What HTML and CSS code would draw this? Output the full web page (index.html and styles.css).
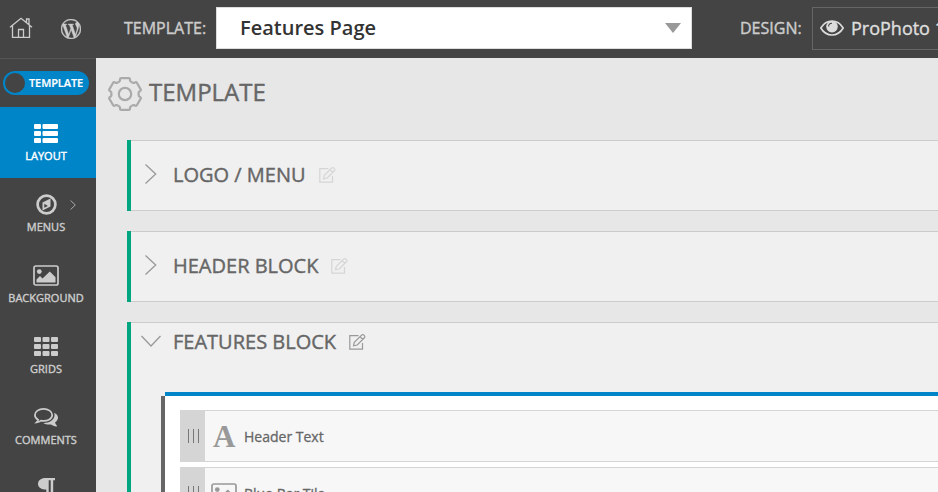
FILE: index.html
```html
<!DOCTYPE html>
<html lang="en">
<head>
<meta charset="utf-8">
<title>Template layout</title>
<link rel="stylesheet" href="styles.css">
</head>
<body>
<svg class="defs" aria-hidden="true">
  <symbol id="edit" viewBox="0 0 17 16">
    <path d="M9.500 1.600H.8v13.600h12.700V9"/>
    <path d="M4.500 11.800L5.300 8.400 12.600 1.200a1.500 1.500 0 0 1 2.400 0l.4.400a1.500 1.500 0 0 1 0 2.200L8.200 11zM11 2.700l2.800 2.800"/>
  </symbol>
  <symbol id="picture" viewBox="0 0 26 21">
    <rect x="1" y="1" width="24" height="19" rx="1.800" fill="none" stroke="currentColor" stroke-width="1.700"/>
    <circle cx="6.300" cy="6.600" r="2.400"/>
    <path d="M3.500 17.500v-3L7 11l2.500 2.500L16.800 6.500l5.700 5.700v5.300z"/>
  </symbol>
</svg>
<header class="topbar">
  <svg class="home" viewBox="0 0 24 22"><path d="M1 10.300L12 1.300l11 9M3.500 8.500v11.800h17V8.500M17.500 5.500V2h2.500v5.500M9.500 20V12.500h5V20"/></svg>
  <svg class="wp" viewBox="0 0 24 24"><path d="M21.469 6.825c.84 1.537 1.318 3.300 1.318 5.175 0 3.979-2.156 7.456-5.363 9.325l3.295-9.527c.615-1.540.820-2.771.820-3.864 0-.405-.026-.780-.070-1.110m-7.981.105c.647-.030 1.232-.105 1.232-.105.582-.075.514-.930-.067-.899 0 0-1.755.135-2.880.135-1.064 0-2.850-.150-2.850-.150-.585-.030-.661.855-.075.885 0 0 .540.061 1.125.090l1.680 4.605-2.370 7.080L5.354 6.900c.649-.030 1.234-.100 1.234-.100.585-.075.516-.930-.065-.896 0 0-1.746.138-2.874.138-.200 0-.438-.008-.690-.015C4.911 3.150 8.235 1.215 12 1.215c2.809 0 5.365 1.072 7.286 2.833-.046-.003-.091-.009-.141-.009-1.060 0-1.812.923-1.812 1.914 0 .890.513 1.643 1.060 2.531.411.720.890 1.643.890 2.977 0 .915-.354 1.994-.821 3.479l-1.075 3.585-3.900-11.610.001.014zM12 22.784c-1.059 0-2.081-.153-3.048-.437l3.237-9.406 3.315 9.087c.024.053.050.101.078.149-1.120.393-2.325.609-3.582.609M1.211 12c0-1.564.336-3.050.935-4.390L7.290 21.709C3.694 19.960 1.212 16.271 1.211 12M12 0C5.385 0 0 5.385 0 12s5.385 12 12 12 12-5.385 12-12S18.615 0 12 0"/></svg>
  <span class="label template-label">TEMPLATE:</span>
  <div class="select"><span>Features Page</span><i class="caret"></i></div>
  <span class="label design-label">DESIGN:</span>
  <div class="design">
    <svg class="eye" viewBox="0 0 24 16"><path class="lid" d="M.8 8C3.500 3.500 7.500 1 12 1s8.500 2.500 11.200 7C20.500 12.500 16.500 15 12 15S3.500 12.500.800 8z"/><circle cx="12" cy="6.600" r="5.800"/><path class="glint" d="M8.600 6.600A3.400 3.400 0 0 1 12 3.200"/></svg>
    <span>ProPhoto 1</span>
  </div>
</header>
<div class="body">
  <nav class="sidebar">
    <div class="toggle-row"><div class="toggle"><i class="knob"></i><span>TEMPLATE</span></div></div>
    <a class="item active">
      <svg width="24" height="19" viewBox="0 0 24 19"><rect width="7" height="5" rx="1"/><rect x="8.500" width="15.500" height="5" rx="1"/><rect y="7" width="7" height="5" rx="1"/><rect x="8.500" y="7" width="15.500" height="5" rx="1"/><rect y="14" width="7" height="5" rx="1"/><rect x="8.500" y="14" width="15.500" height="5" rx="1"/></svg>
      <span>LAYOUT</span>
    </a>
    <a class="item">
      <svg width="21" height="21" viewBox="0 0 21 21"><circle cx="10.500" cy="10.500" r="8.900" fill="none" stroke="currentColor" stroke-width="2.700"/><path fill-rule="evenodd" d="M14.500 4.500v8L6.500 16.500v-8zM8.300 9.800v4l3.600-1.800z"/></svg>
      <span>MENUS</span>
      <svg class="more" viewBox="0 0 6 10"><path d="M.6.500L5.300 5 .600 9.500"/></svg>
    </a>
    <a class="item">
      <svg class="pic" width="26" height="21"><use href="#picture"/></svg>
      <span>BACKGROUND</span>
    </a>
    <a class="item">
      <svg width="24" height="19" viewBox="0 0 24 19"><rect width="7" height="5" rx="1"/><rect x="8.500" width="7" height="5" rx="1"/><rect x="17" width="7" height="5" rx="1"/><rect y="7" width="7" height="5" rx="1"/><rect x="8.500" y="7" width="7" height="5" rx="1"/><rect x="17" y="7" width="7" height="5" rx="1"/><rect y="14" width="7" height="5" rx="1"/><rect x="8.500" y="14" width="7" height="5" rx="1"/><rect x="17" y="14" width="7" height="5" rx="1"/></svg>
      <span>GRIDS</span>
    </a>
    <a class="item">
      <svg class="talk" width="24" height="19" viewBox="0 0 24 19"><path d="M9.500.900C4.800.900.900 3.500.900 7c0 2 1.300 3.700 3.200 4.800-.2 1-.7 1.700-1.500 2.500 1.700-.2 3.200-.8 4.400-1.700 6.300 1.200 11.200-1.700 11.200-5.600C18.200 3.500 14.200.900 9.500.900z" fill="none" stroke="currentColor" stroke-width="1.700"/><path d="M20.200 4.800c2.300 1 3.800 2.800 3.800 4.900 0 1.900-1.200 3.500-3 4.700.3 1.200 1 2 1.800 3 .3.600 0 1.100-.6 1-2-.2-3.700-1-5.100-2-2.800.4-5.700-.1-7.800-1.400 6.500 0 11.200-3.500 11.200-8 0-.8-.1-1.500-.3-2.200z"/></svg>
      <span>COMMENTS</span>
    </a>
    <a class="item">
      <svg class="pilcrow" width="17" height="21" viewBox="0 0 17 21"><path d="M7.500 0H17v2.300h-1.800V21h-2.500V2.300h-2V21H8.300v-9.500C3.200 11.500 0 9.500 0 6 0 2.500 3 0 7.500 0z"/></svg>
    </a>
  </nav>
  <main class="canvas">
    <div class="heading">
      <svg class="gear" viewBox="-17 -17 34 34">
        <path id="tooth" d="M-6.800-11.800L-5.800-12.400Q-5.200-12.700-5-13.500V-14.500Q-5-15.900-3.600-15.900H3.600Q5-15.900 5-14.500V-13.500Q5.200-12.700 5.800-12.400L6.800-11.800"/>
        <use href="#tooth" transform="rotate(60)"/><use href="#tooth" transform="rotate(120)"/><use href="#tooth" transform="rotate(180)"/><use href="#tooth" transform="rotate(240)"/><use href="#tooth" transform="rotate(300)"/>
        <circle r="6.200"/>
      </svg>
      <h1>TEMPLATE</h1>
    </div>
    <section class="block">
      <svg class="chev" viewBox="0 0 20 20"><path d="M4.500.500l10.200 9.500-10.200 9.500"/></svg>
      <h2>LOGO / MENU</h2>
      <svg class="edit"><use href="#edit"/></svg>
    </section>
    <section class="block">
      <svg class="chev" viewBox="0 0 20 20"><path d="M4.500.500l10.200 9.500-10.200 9.500"/></svg>
      <h2>HEADER BLOCK</h2>
      <svg class="edit"><use href="#edit"/></svg>
    </section>
    <section class="block open">
      <div class="block-head">
        <svg class="chev" viewBox="0 0 20 20"><path d="M.5 5l9.500 10L19.500 5"/></svg>
        <h2>FEATURES BLOCK</h2>
        <svg class="edit strong"><use href="#edit"/></svg>
      </div>
      <div class="row-wrap">
        <div class="column">
          <div class="tile">
            <div class="handle"><i></i><i></i><i></i></div>
            <span class="glyph">A</span>
            <span class="name">Header Text</span>
          </div>
          <div class="tile">
            <div class="handle"><i></i><i></i><i></i></div>
            <span class="glyph pic-glyph"><svg width="26" height="21"><use href="#picture"/></svg></span>
            <span class="name">Blue Bar Tile</span>
          </div>
        </div>
      </div>
    </section>
  </main>
</div>
</body>
</html>
```
FILE: styles.css
```css
* { box-sizing: border-box; }
body {
  margin: 0;
  width: 938px;
  height: 492px;
  overflow: hidden;
  background: #e7e7e7;
  font-family: "Open Sans", sans-serif;
  color: #666;
}
svg { display: block; flex: none; fill: currentColor; }
.defs { position: absolute; width: 0; height: 0; }
h1, h2 { margin: 0; font-weight: 400; white-space: nowrap; -webkit-text-stroke: 0.4px; }

.topbar {
  display: flex;
  height: 58px;
  padding-left: 9px;
  background: #444;
  color: #ccc;
  overflow: hidden;
  white-space: nowrap;
}
.home { width: 24px; height: 22px; margin-top: 17px; fill: none; stroke: #ccc; stroke-width: 1.3; }
.wp { width: 20px; height: 20px; margin: 19px 0 0 28px; stroke: #ccc; stroke-width: 0.5; }
.label { flex: none; font-size: 16px; line-height: 22px; margin-top: 17px; -webkit-text-stroke: 0.4px; }
.template-label { width: 92px; margin-left: 43px; }
.select {
  display: flex;
  justify-content: space-between;
  flex: none;
  width: 476px;
  height: 42px;
  margin-top: 7px;
  padding: 0 10px 0 23px;
  border: 1px solid #ddd;
  background: #fff;
  color: #333;
  font-size: 20px;
  font-weight: 600;
  line-height: 40px;
}
.caret { margin-top: 15px; width: 0; height: 0; border: 8px solid transparent; border-top: 10px solid #999; border-bottom: 0; }
.design-label { width: 72px; margin-left: 48px; }
.design {
  display: flex;
  flex: none;
  width: 160px;
  height: 43px;
  margin-top: 7px;
  padding-left: 7px;
  border: 1px solid #666;
  color: #ddd;
  font-size: 18px;
  line-height: 40px;
  -webkit-text-stroke: 0.4px;
}
.eye { width: 24px; height: 16px; margin: 12px 7px 0 0; }
.eye .lid { fill: none; stroke: #ddd; stroke-width: 1.6; }
.eye .glint { fill: none; stroke: #444; stroke-width: 1.1; }

.body { display: flex; height: 434px; }
.sidebar { flex: none; width: 96px; background: #444; border-top: 1px solid #555; color: #ccc; overflow: hidden; }
.toggle-row { height: 48px; padding: 12px 0 0 3px; }
.toggle {
  display: flex;
  width: 86px;
  height: 24px;
  padding: 2px;
  border-radius: 12px;
  background: #0085c8;
  color: #fff;
  font-size: 11px;
  font-weight: 600;
  line-height: 19px;
  letter-spacing: -0.1px;
  -webkit-text-stroke: 0.2px;
}
.knob { width: 20px; height: 20px; margin-right: 4px; border-radius: 50%; background: #444; }
.item {
  position: relative;
  display: grid;
  grid-template-rows: 52px 1fr;
  justify-items: center;
  align-items: center;
  height: 71px;
  padding-right: 4px;
  font-size: 11px;
  line-height: 15px;
  -webkit-text-stroke: 0.4px;
}
.item span { align-self: start; margin-top: -11px; }
.item.active { background: #0085c8; color: #fff; }
.item .pic, .item .talk { margin-top: 1px; }
.item .more { position: absolute; left: 70px; top: 22px; width: 6px; height: 10px; fill: none; stroke: #aaa; stroke-width: 1; }

.canvas { flex: 1; min-width: 0; overflow: hidden; padding-left: 31px; }
.heading { display: flex; height: 82px; margin-left: -19px; }
.gear { width: 34px; height: 34px; margin: 19px 7px 0 0; fill: none; stroke: #aaa; stroke-width: 2.2; }
h1 { margin-top: 17px; font-size: 24px; line-height: 34px; }
.block {
  display: flex;
  align-items: center;
  height: 71px;
  margin-bottom: 20px;
  padding-left: 10px;
  border-left: 4px solid #00a680;
  background: #f0f0f0;
  box-shadow: inset 0 1px #ccc, inset 0 -1px #ccc;
}
.chev { width: 20px; height: 20px; margin: -3px 12px 0 0; fill: none; stroke: #999; stroke-width: 1.3; }
h2 { font-size: 20px; line-height: 28px; margin-top: -2px; }
.edit { width: 17px; height: 16px; margin: -1px 0 0 13px; fill: none; stroke: #d5d5d5; stroke-width: 1.2; }
.edit.strong { stroke: #999; margin-top: 0; }
.block.open { display: block; height: 200px; }
.block-head { display: flex; align-items: center; height: 70px; padding-bottom: 30px; }
.open h2 { margin-top: -1px; }
.row-wrap { margin-left: 24px; border-top: 4px solid #0085c8; }
.column { margin-left: -4px; padding: 14px 0 0 15px; border-left: 4px solid #666; background: #fff; }
.tile { display: flex; height: 52px; margin-bottom: 5px; border: 1px solid #d5d5d5; border-width: 1px 0; background: #f7f7f7; }
.handle { display: flex; justify-content: center; gap: 4px; width: 25px; margin: -1px 0; padding: 19px 0 0 2px; background: #d5d5d5; }
.handle i { width: 1px; height: 14px; background: #777; }
.glyph { width: 39px; height: 50px; display: grid; align-items: center; padding-left: 8px; color: #999; font: bold 31px/51px "Liberation Serif", serif; }
.pic-glyph { padding-left: 6px; }
.name { font-size: 14px; line-height: 51px; -webkit-text-stroke: 0.3px; }
```
